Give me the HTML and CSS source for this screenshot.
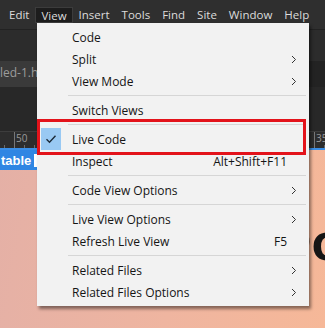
FILE: index.html
```html
<!DOCTYPE html>
<html lang="en">
<head>
    <meta charset="UTF-8">
    <meta name="viewport" content="width=device-width, initial-scale=1.0">
    <title>View menu - Live Code</title>
    <link rel="stylesheet" href="styles.css">
</head>
<body>
    <div class="app">
        <nav class="menubar">
            <span class="mb-item">Edit</span>
            <span class="mb-item active">View</span>
            <span class="mb-item">Insert</span>
            <span class="mb-item">Tools</span>
            <span class="mb-item">Find</span>
            <span class="mb-item">Site</span>
            <span class="mb-item">Window</span>
            <span class="mb-item">Help</span>
        </nav>

        <div class="toolbar"></div>

        <div class="tabbar">
            <div class="tab">led-1.html</div>
        </div>

        <div class="panel"></div>

        <div class="ruler">
            <span class="mark">50</span>
            <span class="mark">100</span>
            <span class="mark">150</span>
            <span class="mark">200</span>
            <span class="mark">250</span>
            <span class="mark">300</span>
            <span class="mark">35</span>
        </div>

        <div class="live">
            <div class="tag"><span class="tag-name">table</span><span class="tag-btn"></span></div>
            <h1 class="doc-title">Doc</h1>
        </div>
    </div>

    <div class="menu">
        <div class="item"><span class="chk"></span><span class="label">Code</span></div>
        <div class="item"><span class="chk"></span><span class="label">Split</span><span class="arrow"><svg width="6" height="9" viewBox="0 0 6 9"><path d="M1 1l3.5 3.5L1 8" fill="none" stroke="#333" stroke-width="1"/></svg></span></div>
        <div class="item"><span class="chk"></span><span class="label">View Mode</span><span class="arrow"><svg width="6" height="9" viewBox="0 0 6 9"><path d="M1 1l3.5 3.5L1 8" fill="none" stroke="#333" stroke-width="1"/></svg></span></div>
        <div class="sep"></div>
        <div class="item"><span class="chk"></span><span class="label">Switch Views</span></div>
        <div class="sep"></div>
        <div class="item"><span class="chk on"><svg width="12" height="10" viewBox="0 0 12 10"><path d="M1.5 5.2l3 3 6-6.5" fill="none" stroke="#1c2a38" stroke-width="1.4"/></svg></span><span class="label">Live Code</span></div>
        <div class="item"><span class="chk"></span><span class="label">Inspect</span><span class="key">Alt+Shift+F11</span><span class="arrow"></span></div>
        <div class="sep"></div>
        <div class="item"><span class="chk"></span><span class="label">Code View Options</span><span class="arrow"><svg width="6" height="9" viewBox="0 0 6 9"><path d="M1 1l3.5 3.5L1 8" fill="none" stroke="#333" stroke-width="1"/></svg></span></div>
        <div class="sep"></div>
        <div class="item"><span class="chk"></span><span class="label">Live View Options</span><span class="arrow"><svg width="6" height="9" viewBox="0 0 6 9"><path d="M1 1l3.5 3.5L1 8" fill="none" stroke="#333" stroke-width="1"/></svg></span></div>
        <div class="item"><span class="chk"></span><span class="label">Refresh Live View</span><span class="key">F5</span><span class="arrow"></span></div>
        <div class="sep"></div>
        <div class="item"><span class="chk"></span><span class="label">Related Files</span><span class="arrow"><svg width="6" height="9" viewBox="0 0 6 9"><path d="M1 1l3.5 3.5L1 8" fill="none" stroke="#333" stroke-width="1"/></svg></span></div>
        <div class="item"><span class="chk"></span><span class="label">Related Files Options</span><span class="arrow"><svg width="6" height="9" viewBox="0 0 6 9"><path d="M1 1l3.5 3.5L1 8" fill="none" stroke="#333" stroke-width="1"/></svg></span></div>
    </div>

    <div class="callout"></div>
</body>
</html>
```

FILE: styles.css
```css
* {
    box-sizing: border-box;
}
body {
    margin: 0;
    width: 325px;
    height: 328px;
    overflow: hidden;
    font-family: 'Open Sans', 'Noto Sans', sans-serif;
    background-color: #2b2b2b;
}
.app {
    display: flex;
    flex-direction: column;
    height: 328px;
}

/* top menu bar */
.menubar {
    display: flex;
    align-items: center;
    height: 30px;
    padding-left: 3px;
    background-color: #2f2f2f;
    border-bottom: 1px solid #222;
}
.mb-item {
    padding: 0 6px;
    height: 16px;
    line-height: 15px;
    font-size: 11.5px;
    color: #dcdcdc;
    white-space: nowrap;
}
.mb-item.active {
    background-color: #1d1d1d;
    border: 1px solid #3c3c3c;
    padding: 0 5px;
}

.toolbar {
    height: 31px;
    background-color: #2c2c2c;
}
.tabbar {
    height: 26px;
    background-color: #232323;
    display: flex;
}
.tab {
    width: 150px;
    background-color: #3a3a3a;
    color: #9c9c9c;
    font-size: 12px;
    line-height: 24px;
    white-space: nowrap;
    overflow: hidden;
}
.panel {
    height: 44px;
    background-color: #282828;
}

/* ruler */
.ruler {
    height: 17px;
    display: flex;
    padding-left: 14px;
    background-color: #2d2d2d;
    border-top: 1px solid #3d3d3d;
    background-image: repeating-linear-gradient(to right, #6a6a6a 0 1px, transparent 1px 10px);
    background-size: 100% 3px;
    background-repeat: no-repeat;
    background-position: 4px bottom;
    overflow: hidden;
}
.mark {
    flex: 0 0 50px;
    border-left: 1px solid #777;
    padding-left: 1px;
    font-size: 10px;
    line-height: 12px;
    color: #9a9a9a;
}

/* live view */
.live {
    flex: 1;
    position: relative;
    background: linear-gradient(100deg, #e4b0a6 0%, #efb5a0 55%, #f6b898 100%);
    border-top: 2px solid #3a8ee6;
    overflow: hidden;
}
.tag {
    position: absolute;
    left: 0;
    top: 0;
    display: flex;
    align-items: center;
    gap: 3px;
    height: 20px;
    padding: 0 4px 0 1px;
    background-color: #2f86e3;
}
.tag-name {
    color: white;
    font-weight: bold;
    font-size: 13px;
    font-family: 'Liberation Sans', Arial, sans-serif;
}
.tag-btn {
    width: 6px;
    height: 13px;
    background-color: white;
}
.doc-title {
    margin: 62px 0 0 274px;
    font-family: 'Liberation Sans', Arial, sans-serif;
    font-size: 52px;
    line-height: 60px;
    font-weight: bold;
    color: #151515;
    white-space: nowrap;
}

/* dropdown */
.menu {
    position: absolute;
    left: 37px;
    top: 23px;
    width: 272px;
    padding: 3px 0;
    background-color: #f2f2f2;
    box-shadow: 2px 3px 3px rgba(0, 0, 0, 0.45);
    font-size: 12px;
    color: #151515;
}
.item {
    display: flex;
    align-items: center;
    height: 22px;
    padding: 0 8px 0 4px;
    white-space: nowrap;
}
.chk {
    flex: 0 0 20px;
    height: 22px;
    display: flex;
    align-items: center;
    justify-content: center;
}
.chk.on {
    background-color: #99c9f3;
}
.label {
    margin-left: 11px;
}
.key {
    margin-left: auto;
}
.arrow {
    flex: 0 0 14px;
    margin-left: auto;
    display: flex;
    align-items: center;
    justify-content: center;
}
.key + .arrow {
    margin-left: 0;
}
.sep {
    height: 7px;
    margin: 0 3px 0 31px;
    background: linear-gradient(#d6d6d6, #d6d6d6) center / 100% 1px no-repeat;
}

.callout {
    position: absolute;
    left: 37px;
    top: 119px;
    width: 269px;
    height: 36px;
    border: 3px solid #e3131b;
}
```
